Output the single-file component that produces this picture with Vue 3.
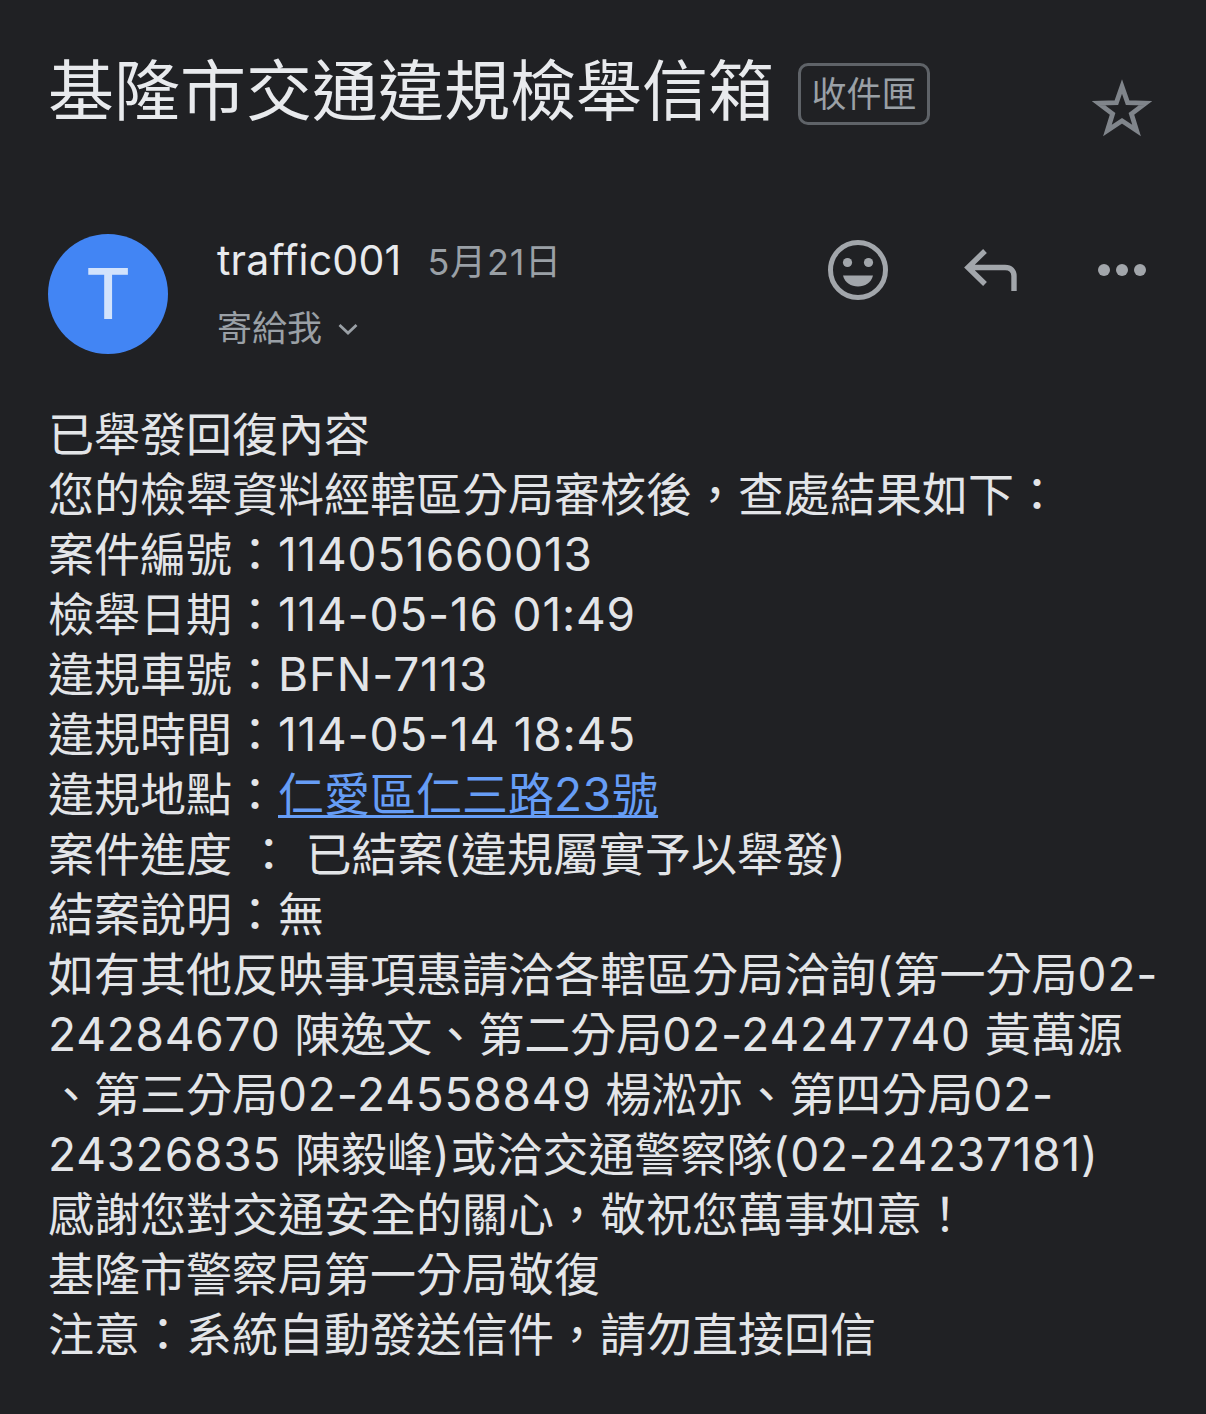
<script setup>
const source = [
  '已舉發回復內容',
  '您的檢舉資料經轄區分局審核後，查處結果如下：',
  '案件編號：114051660013',
  '檢舉日期：114-05-16 01:49',
  '違規車號：BFN-7113',
  '違規時間：114-05-14 18:45',
  { label: '違規地點：', link: '仁愛區仁三路23號' },
  '案件進度 ： 已結案(違規屬實予以舉發)',
  '結案說明：無',
  '如有其他反映事項惠請洽各轄區分局洽詢(第一分局02-',
  '24284670 陳逸文、第二分局02-24247740 黃萬源',
  '、第三分局02-24558849 楊淞亦、第四分局02-',
  '24326835 陳毅峰)或洽交通警察隊(02-24237181)',
  '感謝您對交通安全的關心，敬祝您萬事如意！',
  '基隆市警察局第一分局敬復',
  '注意：系統自動發送信件，請勿直接回信',
]
// Latin runs are set a little wider than the CJK text around them.
const runs = (text) =>
  text.split(/([\x20-\x7e]+)/).filter(Boolean).map((t) => ({ t, latin: /^[\x20-\x7e]/.test(t) }))
const lines = source.map((l) =>
  typeof l === 'string' ? { runs: runs(l) } : { runs: runs(l.label), link: runs(l.link) },
)
</script>

<template>
  <main class="page">
    <header class="subject">
      <h1 class="title">基隆市交通違規檢舉信箱</h1>
      <span class="label">收件匣</span>
      <svg class="star" viewBox="0 0 60 60" width="60" height="60">
        <path d="M30 8.5 L35.6 24.6 L53.6 25.1 L39.4 35.8 L44.6 52.5 L30 42.8 L15.4 52.5 L20.6 35.8 L6.4 25.1 L24.4 24.6 Z" fill="none" stroke="#80858b" stroke-width="4.8" />
      </svg>
    </header>

    <section class="sender">
      <div class="avatar">T</div>
      <div class="meta">
        <div class="from">
          <span class="name">traffic001</span>
          <span class="date">5月21日</span>
        </div>
        <div class="to">
          <span>寄給我</span>
          <svg viewBox="0 0 20 12" width="20" height="12">
            <path d="M1.5 2 L10 10 L18.5 2" fill="none" stroke="#9aa0a6" stroke-width="2.8" />
          </svg>
        </div>
      </div>
      <div class="actions">
        <svg viewBox="0 0 60 60" width="60" height="60">
          <circle cx="30" cy="30" r="27.5" fill="none" stroke="#a2a6ab" stroke-width="5" />
          <circle cx="19.5" cy="22.5" r="4.6" fill="#a2a6ab" />
          <circle cx="40.5" cy="22.5" r="4.6" fill="#a2a6ab" />
          <path d="M15 35.5 H45 C43 43 37 46.5 30 46.5 C23 46.5 17 43 15 35.5 Z" fill="#a2a6ab" />
        </svg>
        <svg viewBox="0 0 56 44" width="56" height="44">
          <path d="M22 3 L5 19.5 L22 36 M5 19.5 H42 C48 19.5 51 23 51 28 V43" fill="none" stroke="#a2a6ab" stroke-width="5.4" />
        </svg>
        <svg viewBox="0 0 50 14" width="50" height="14">
          <circle cx="7" cy="7" r="6" fill="#a2a6ab" />
          <circle cx="25" cy="7" r="6" fill="#a2a6ab" />
          <circle cx="43" cy="7" r="6" fill="#a2a6ab" />
        </svg>
      </div>
    </section>

    <article class="body">
      <div v-for="(line, i) in lines" :key="i">
        <span v-for="(r, j) in line.runs" :key="j" :class="{ latin: r.latin }">{{ r.t }}</span>
        <a v-if="line.link" class="link"><span v-for="(r, j) in line.link" :key="j" :class="{ latin: r.latin }">{{ r.t }}</span></a>
      </div>
    </article>
  </main>
</template>

<style>
html, body { margin: 0; background: #202124; }
</style>

<style scoped>
.page {
  box-sizing: border-box;
  width: 1206px;
  height: 1414px;
  overflow: hidden;
  padding: 50px 50px 0 48px;
  background: #202124;
  font-family: Inter, "Noto Sans CJK TC", sans-serif;
}
.subject {
  display: flex;
  align-items: flex-start;
  height: 82px;
}
.title {
  margin: 0;
  font-size: 66px;
  line-height: 82px;
  font-weight: 400;
  color: #e8eaed;
  white-space: nowrap;
}
.label {
  box-sizing: border-box;
  width: 132px;
  height: 62px;
  margin: 13px 0 0 24px;
  border: 3px solid #5f6368;
  border-radius: 10px;
  font-size: 35px;
  line-height: 56px;
  text-align: center;
  color: #9aa0a6;
  white-space: nowrap;
}
.star { margin: 28px 0 0 162px; flex: none; }
.sender {
  display: flex;
  margin: 102px 0 0 0;
  height: 120px;
}
.avatar {
  flex: none;
  width: 120px;
  height: 120px;
  border-radius: 50%;
  background: #4285f4;
  color: #d2e3fc;
  font-size: 70px;
  font-weight: 500;
  line-height: 120px;
  text-align: center;
}
.meta { margin-left: 49px; flex: 1; }
.from { display: flex; align-items: baseline; gap: 26px; line-height: 52px; }
.name { font-size: 41px; letter-spacing: 0.2px; color: #e8eaed; }
.date { font-size: 36px; letter-spacing: 0.8px; color: #9aa0a6; }
.to {
  display: flex;
  align-items: center;
  gap: 16px;
  margin-top: 18px;
  font-size: 35px;
  line-height: 44px;
  color: #9aa0a6;
}
.to svg { margin-top: 2px; }
.actions {
  display: flex;
  align-items: center;
  flex: none;
  height: 72px;
  margin-right: 9px;
}
.actions svg:nth-child(2) { margin-left: 75px; }
.actions svg:nth-child(3) { margin-left: 78px; }
.body {
  margin-top: 50px;
  font-size: 46px;
  line-height: 60px;
  color: #e3e5e8;
  white-space: pre;
}
.body > div { height: 60px; }
.latin { letter-spacing: 0.8px; }
.link {
  color: #669df6;
  text-decoration: underline;
  text-decoration-thickness: 3px;
  text-underline-offset: 4px;
}
</style>
